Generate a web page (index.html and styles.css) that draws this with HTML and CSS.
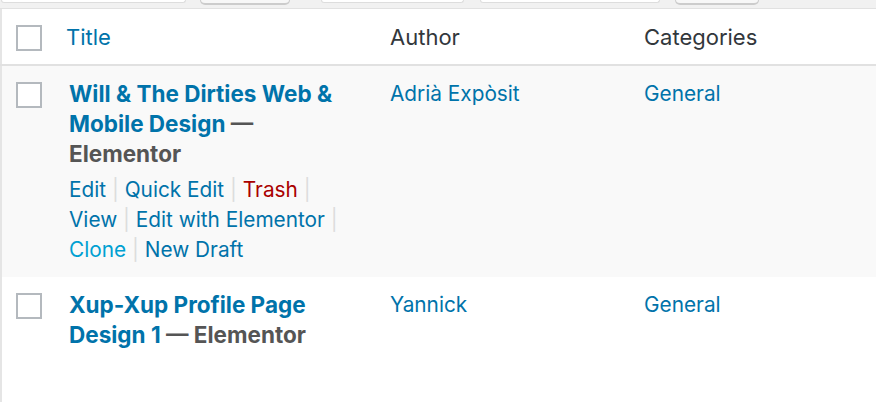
FILE: index.html
```html
<!DOCTYPE html>
<html lang="en">
<head>
  <meta charset="UTF-8">
  <meta name="viewport" content="width=device-width, initial-scale=1.0">
  <title>Posts</title>
  <link rel="stylesheet" href="styles.css">
</head>
<body>
<div class="tablenav">
  <span class="tn-select tn-w1"></span>
  <span class="tn-button tn-w2"></span>
  <span class="tn-select tn-w3"></span>
  <span class="tn-select tn-w4"></span>
  <span class="tn-button tn-w5"></span>
</div>

<table class="list-table">
  <colgroup>
    <col class="col-cb">
    <col class="col-title">
    <col class="col-author">
    <col>
  </colgroup>
  <thead>
    <tr>
      <th class="check"><span class="checkbox"></span></th>
      <th class="th-title"><a href="#">Title</a></th>
      <th>Author</th>
      <th>Categories</th>
    </tr>
  </thead>
  <tbody>
    <tr class="alt">
      <td class="check"><span class="checkbox"></span></td>
      <td class="title-cell">
        <div class="row-title"><a href="#">Will &amp; The Dirties Web &amp; Mobile Design</a> <span class="state">— Elementor</span></div>
        <div class="row-actions">
          <span class="act"><a href="#">Edit</a> <span class="sep">|</span></span>
          <span class="act"><a href="#">Quick Edit</a> <span class="sep">|</span></span>
          <span class="act"><a href="#" class="trash">Trash</a> <span class="sep">|</span></span>
          <span class="act"><a href="#">View</a> <span class="sep">|</span></span>
          <span class="act"><a href="#">Edit with Elementor</a> <span class="sep">|</span></span>
          <span class="act"><a href="#" class="clone">Clone</a> <span class="sep">|</span></span>
          <span class="act"><a href="#">New Draft</a></span>
        </div>
      </td>
      <td><a href="#">Adrià Expòsit</a></td>
      <td><a href="#">General</a></td>
    </tr>
    <tr>
      <td class="check"><span class="checkbox"></span></td>
      <td class="title-cell">
        <div class="row-title"><a href="#">Xup-Xup Profile Page Design 1</a> <span class="state">— Elementor</span></div>
        <div class="row-actions hidden">
          <span class="act"><a href="#">Edit</a> <span class="sep">|</span></span>
          <span class="act"><a href="#">Quick Edit</a> <span class="sep">|</span></span>
          <span class="act"><a href="#" class="trash">Trash</a> <span class="sep">|</span></span>
          <span class="act"><a href="#">View</a> <span class="sep">|</span></span>
          <span class="act"><a href="#">Edit with Elementor</a> <span class="sep">|</span></span>
          <span class="act"><a href="#" class="clone">Clone</a> <span class="sep">|</span></span>
          <span class="act"><a href="#">New Draft</a></span>
        </div>
      </td>
      <td><a href="#">Yannick</a></td>
      <td><a href="#">General</a></td>
    </tr>
  </tbody>
</table>
</body>
</html>
```

FILE: styles.css
```css
body { margin: 0; background: #f1f1f1; font-family: Inter, "Noto Sans", sans-serif; font-size: 20.8px; color: #32373c; overflow: hidden; }
a { color: #0073aa; text-decoration: none; }

.tablenav { display: flex; height: 9px; border-bottom: 1px solid #e1e1e1; box-sizing: border-box; }
.tablenav span { display: block; box-sizing: border-box; }
.tn-select { height: 3px; background: #fff; border: 1px solid #ddd; border-top: 0; border-radius: 0 0 5px 5px; }
.tn-button { height: 5px; background: #f7f7f7; border: 1px solid #ccc; border-top: 0; border-bottom-width: 2px; border-radius: 0 0 5px 5px; }
.tn-w1 { margin-left: 1px; width: 185px; }
.tn-w2 { margin-left: 14px; width: 90px; }
.tn-w3 { margin-left: 31px; width: 143px; }
.tn-w4 { margin-left: 16px; width: 180px; }
.tn-w5 { margin-left: 15px; width: 84px; }

.list-table { width: 100%; border-collapse: collapse; table-layout: fixed; background: #fff; border-left: 2px solid #e5e5e5; }
.col-cb { width: 52px; }
.col-title { width: 323px; }
.col-author { width: 254px; }

th { text-align: left; font-weight: normal; font-size: 22px; height: 53px; padding: 0 14px; border-bottom: 2px solid #e1e1e1; }
th.th-title { padding-left: 13px; }
td { vertical-align: top; padding: 13px 14px 12px; line-height: 30px; }
th.check, td.check { padding: 0 0 0 14px; }
th.check { padding-top: 2px; }
td.check { padding-top: 16px; }
tr.alt { background: #f9f9f9; }

.checkbox { display: block; width: 26px; height: 26px; box-sizing: border-box; border: 2px solid #b4b9be; background: #fff; }

.title-cell { padding-left: 16px; padding-right: 18px; }
.row-title { font-weight: bold; font-size: 22.5px; color: #555; }
.row-title a { color: #0073aa; }
.row-actions { margin-top: 6px; }
.row-actions.hidden { visibility: hidden; }
.act { white-space: nowrap; }
.row-actions .sep { color: #ddd; }
.row-actions .trash { color: #a00; }
.row-actions .clone { color: #00a0d2; }
```
